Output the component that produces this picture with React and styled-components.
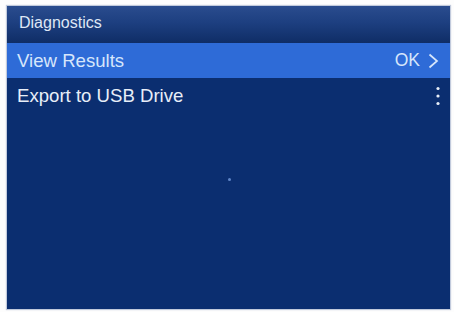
import React from "react";
import styled, { createGlobalStyle } from "styled-components";

const Global = createGlobalStyle`
  html, body { margin: 0; padding: 0; background: #fdfdfd; }
  body { padding: 6px 4px 3px 7px; font-family: "Liberation Sans", Arial, sans-serif; }
`;

const Panel = styled.div`
  width: 443px;
  height: 303px;
  background: #0b2e70;
  display: flex;
  flex-direction: column;
  position: relative;
  box-shadow: 0 0 1px 1px rgba(120, 140, 180, 0.45);
`;

const Header = styled.div`
  height: 37px;
  display: flex;
  align-items: center;
  padding-left: 12px;
  padding-bottom: 3px;
  box-sizing: border-box;
  background: linear-gradient(#2a4c8e 0%, #1d3f80 45%, #0f2d66 100%);
  color: #dfe7f5;
  font-size: 16px;
`;

const Row = styled.div`
  height: ${(p) => (p.$h ? p.$h : 35)}px;
  display: flex;
  align-items: center;
  justify-content: space-between;
  padding: 0 ${(p) => (p.$pr ? p.$pr : 10)}px 0 10px;
  box-sizing: border-box;
  background: ${(p) => (p.$active ? "#2e6bd7" : "transparent")};
  color: ${(p) => (p.$active ? "#d6e6fb" : "#e8eef8")};
  font-size: 18.6px;
`;

const Right = styled.div`
  display: flex;
  align-items: center;
  gap: 7px;
  font-size: 17.5px;
`;

const Dot = styled.div`
  position: absolute;
  left: 221px;
  top: 172px;
  width: 3px;
  height: 3px;
  border-radius: 50%;
  background: #5f86c8;
`;

const Chevron = () => (
  <svg width="12" height="16" viewBox="0 0 12 16">
    <path d="M2.5 1.5 L10 8 L2.5 14.5" fill="none" stroke="#d6e6fb" strokeWidth="1.7" />
  </svg>
);

const Kebab = () => (
  <svg width="6" height="22" viewBox="0 0 6 22">
    <circle cx="3" cy="3.5" r="1.6" fill="#e8eef8" />
    <circle cx="3" cy="11" r="1.6" fill="#e8eef8" />
    <circle cx="3" cy="18.5" r="1.6" fill="#e8eef8" />
  </svg>
);

export default function App() {
  return (
    <>
      <Global />
      <Panel>
        <Header>Diagnostics</Header>
        <Row $active $pr={11}>
          <span>View Results</span>
          <Right>
            <span>OK</span>
            <Chevron />
          </Right>
        </Row>
        <Row $h={36} $pr={9}>
          <span>Export to USB Drive</span>
          <Kebab />
        </Row>
        <Dot />
      </Panel>
    </>
  );
}
